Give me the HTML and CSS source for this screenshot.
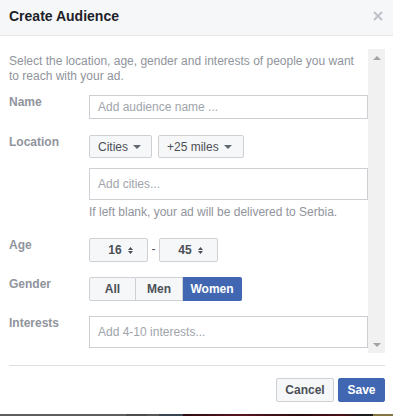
FILE: index.html
```html
<!DOCTYPE html>
<html lang="en">
<head>
  <meta charset="UTF-8" />
  <title>Create Audience</title>
  <link rel="stylesheet" href="styles.css">
</head>
<body>
  <div class="dialog">
    <div class="dialog-header">
      <span class="dialog-title">Create Audience</span>
      <svg class="close-btn" width="10" height="10" viewBox="0 0 10 10">
        <path d="M1 1 L9 9 M9 1 L1 9" stroke="#bec3c9" stroke-width="2" fill="none"/>
      </svg>
    </div>

    <div class="dialog-body">
      <div class="scroll-area">
        <div class="form">
          <p class="intro">Select the location, age, gender and interests of people you want to reach with your ad.</p>

          <div class="row row-name">
            <label class="row-label">Name</label>
            <div class="row-field">
              <div class="text-input short">Add audience name ...</div>
            </div>
          </div>

          <div class="row row-location">
            <label class="row-label">Location</label>
            <div class="row-field">
              <div class="btn-group">
                <button class="drop-btn cities">Cities <span class="caret"></span></button>
                <button class="drop-btn miles">+25 miles <span class="caret"></span></button>
              </div>
              <div class="text-input tall cities-input">Add cities...</div>
              <p class="hint">If left blank, your ad will be delivered to Serbia.</p>
            </div>
          </div>

          <div class="row row-age">
            <label class="row-label">Age</label>
            <div class="row-field age-field">
              <button class="age-btn">16
                <svg class="spin" width="5" height="7" viewBox="0 0 5 7"><path d="M0 3 L2.5 0 L5 3 Z M0 4 L2.5 7 L5 4 Z" fill="#4b4f56"/></svg>
              </button>
              <span class="dash">-</span>
              <button class="age-btn">45
                <svg class="spin" width="5" height="7" viewBox="0 0 5 7"><path d="M0 3 L2.5 0 L5 3 Z M0 4 L2.5 7 L5 4 Z" fill="#4b4f56"/></svg>
              </button>
            </div>
          </div>

          <div class="row row-gender">
            <label class="row-label">Gender</label>
            <div class="row-field">
              <div class="segmented">
                <button class="seg seg-all">All</button>
                <button class="seg seg-men">Men</button>
                <button class="seg seg-women selected">Women</button>
              </div>
            </div>
          </div>

          <div class="row row-interests">
            <label class="row-label">Interests</label>
            <div class="row-field">
              <div class="text-input tall">Add 4-10 interests...</div>
            </div>
          </div>
        </div>

        <div class="fake-scrollbar">
          <span class="arrow-up"></span>
          <span class="arrow-down"></span>
        </div>
      </div>
    </div>

    <div class="dialog-footer">
      <button class="footer-btn cancel">Cancel</button>
      <button class="footer-btn save">Save</button>
    </div>
  </div>
  <div class="backdrop-strip"></div>
</body>
</html>
```

FILE: styles.css
```css
body {
  margin: 0;
  font-family: "Liberation Sans", Arial, sans-serif;
  font-size: 12px;
  color: #4b4f56;
  background: #fff;
}
.dialog {
  width: 393px;
  height: 414px;
  background: #fff;
  display: flex;
  flex-direction: column;
}
.dialog-header {
  height: 36px;
  box-sizing: border-box;
  background: #f6f7f9;
  border-bottom: 1px solid #e5e5e5;
  display: flex;
  align-items: center;
  justify-content: space-between;
  padding: 0 10px 0 9px;
}
.dialog-title {
  font-size: 14px;
  font-weight: bold;
  color: #1d2129;
  margin-top: -3px;
}
.close-btn {
  margin-top: -3px;
}
.dialog-body {
  padding: 13px 8px 0 9px;
}
.scroll-area {
  display: flex;
  height: 304px;
}
.form {
  flex: 1;
}
.intro {
  margin: 0;
  padding-top: 5px;
  line-height: 15px;
  color: #90949c;
  padding-right: 12px;
}
.row {
  display: flex;
}
.row-label {
  width: 80px;
  flex: none;
  font-weight: bold;
  color: #90949c;
  line-height: 14px;
}
.row-field {
  flex: 1;
}
.row-name { margin-top: 11px; }
.row-location { margin-top: 16px; }
.row-age { margin-top: 18px; }
.row-gender { margin-top: 15px; }
.row-interests { margin-top: 15px; }

.text-input {
  box-sizing: border-box;
  border: 1px solid #ccd0d5;
  color: #a0a4ab;
  padding: 0 8px;
  display: flex;
  align-items: center;
}
.text-input.short { height: 24px; }
.text-input.tall { height: 32px; }
.cities-input { margin-top: 10px; }
.hint {
  margin: 5px 0 0;
  line-height: 15px;
  color: #90949c;
}

button {
  font-family: inherit;
  font-size: 12px;
  cursor: pointer;
}
.btn-group {
  display: flex;
  gap: 6px;
}
.drop-btn {
  height: 23px;
  box-sizing: border-box;
  background: #f6f7f9;
  border: 1px solid #ced0d4;
  border-radius: 2px;
  color: #4b4f56;
  padding: 0 8px;
  display: flex;
  align-items: center;
  gap: 5px;
}
.drop-btn.cities { width: 63px; }
.drop-btn.miles { width: 86px; }
.caret {
  width: 0;
  height: 0;
  border-left: 4px solid transparent;
  border-right: 4px solid transparent;
  border-top: 4px solid #606770;
  margin-top: 1px;
}

.age-field {
  display: flex;
  align-items: center;
}
.age-btn {
  width: 59px;
  height: 24px;
  box-sizing: border-box;
  background: #f6f7f9;
  border: 1px solid #ced0d4;
  border-radius: 2px;
  color: #4b4f56;
  font-weight: bold;
  display: flex;
  align-items: center;
  justify-content: center;
  gap: 6px;
  padding: 0 0 0 4px;
}
.dash {
  width: 11px;
  text-align: center;
  color: #4b4f56;
  margin-top: -2px;
}

.segmented {
  display: flex;
}
.seg {
  height: 24px;
  box-sizing: border-box;
  background: #f6f7f9;
  border: 1px solid #ced0d4;
  color: #4b4f56;
  font-weight: bold;
  padding: 0;
}
.seg-all {
  width: 47px;
  border-radius: 2px 0 0 2px;
}
.seg-men {
  width: 47px;
  border-left: none;
}
.seg-women {
  width: 59px;
  border-left: none;
  border-radius: 0 2px 2px 0;
}
.seg.selected {
  background: #4267b2;
  border-color: #4267b2;
  color: #fff;
}

.fake-scrollbar {
  width: 17px;
  flex: none;
  background: #f1f1f1;
  display: flex;
  flex-direction: column;
  justify-content: space-between;
  align-items: center;
  padding: 7px 0 6px;
  box-sizing: border-box;
}
.arrow-up {
  width: 0;
  height: 0;
  border-left: 4px solid transparent;
  border-right: 4px solid transparent;
  border-bottom: 4px solid #a3a3a3;
}
.arrow-down {
  width: 0;
  height: 0;
  border-left: 4px solid transparent;
  border-right: 4px solid transparent;
  border-top: 4px solid #a3a3a3;
}

.dialog-footer {
  margin: 12px 8px 0 9px;
  border-top: 1px solid #dddfe2;
  padding-top: 12px;
  display: flex;
  justify-content: flex-end;
  gap: 4px;
}
.footer-btn {
  height: 24px;
  box-sizing: border-box;
  border-radius: 2px;
  font-weight: bold;
  padding: 0;
}
.cancel {
  width: 58px;
  background: #f6f7f9;
  border: 1px solid #ced0d4;
  color: #4b4f56;
}
.save {
  width: 47px;
  background: #4267b2;
  border: 1px solid #4267b2;
  color: #fff;
}

.backdrop-strip {
  height: 2px;
  background: linear-gradient(to right,
    #5e5e5e 0, #5e5e5e 126px,
    #4c4c4c 126px, #4c4c4c 147px,
    #575757 147px, #575757 159px,
    #3a4352 159px, #3a4352 183px,
    #2a0c10 183px, #5a1420 240px, #2a0c10 300px, #4a1018 340px,
    #1c1c1c 360px, #1c1c1c 373px,
    #857545 373px, #857545 393px);
}
```
